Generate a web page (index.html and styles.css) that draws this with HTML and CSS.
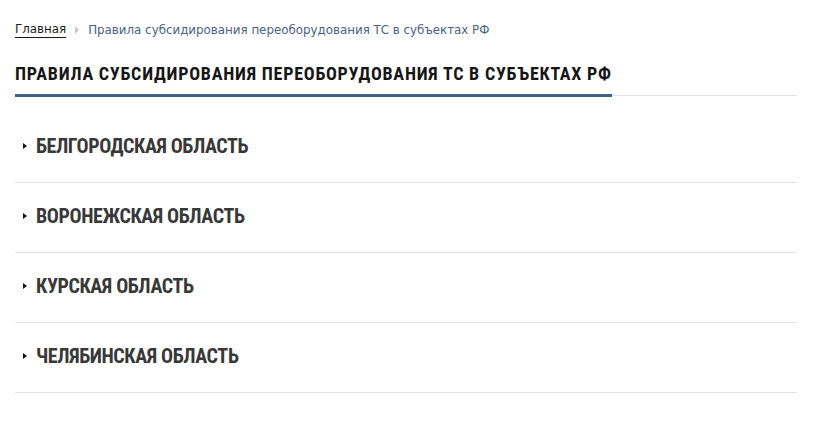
FILE: index.html
```html
<!DOCTYPE html>
<html lang="ru">
<head>
<meta charset="utf-8">
<title>Правила субсидирования переоборудования ТС в субъектах РФ</title>
<link rel="stylesheet" href="styles.css">
</head>
<body>
<div class="page">
  <nav class="crumbs">
    <a class="crumb-link" href="#">Главная</a>
    <span class="crumb-sep"></span>
    <span class="crumb-current">Правила субсидирования переоборудования ТС в субъектах РФ</span>
  </nav>
  <h1 class="title"><span class="title-text">Правила субсидирования переоборудования ТС в субъектах РФ</span></h1>
  <ul class="regions">
    <li class="region"><span class="marker"></span><span class="region-name">Белгородская область</span></li>
    <li class="region"><span class="marker"></span><span class="region-name">Воронежская область</span></li>
    <li class="region"><span class="marker"></span><span class="region-name">Курская область</span></li>
    <li class="region"><span class="marker"></span><span class="region-name">Челябинская область</span></li>
  </ul>
</div>
</body>
</html>
```

FILE: styles.css
```css
html, body {
  margin: 0;
  padding: 0;
  background: #fff;
}
.page {
  width: 782px;
  margin-left: 15px;
}
.crumbs {
  display: flex;
  align-items: center;
  padding-top: 21px;
  height: 18px;
  font-family: "DejaVu Sans", sans-serif;
  font-size: 11.85px;
  line-height: 18px;
}
.crumb-link {
  color: #1a1a1a;
  text-decoration: none;
  border-bottom: 1px solid #1a1a1a;
  line-height: 15px;
}
.crumb-sep {
  width: 0;
  height: 0;
  border-left: 4px solid #c8c8c8;
  border-top: 4px solid transparent;
  border-bottom: 4px solid transparent;
  margin: 0 9px 0 9px;
}
.crumb-current {
  color: #4a6285;
}
.title {
  margin: 25px 0 0 0;
  border-bottom: 1px solid #e3e3e3;
  font-family: Roboto, sans-serif;
  font-stretch: 75%;
  font-weight: 700;
  font-size: 18px;
  letter-spacing: 0.76px;
  line-height: 20px;
  text-transform: uppercase;
  color: #161616;
}
.title-text {
  display: inline-block;
  padding-bottom: 10px;
  border-bottom: 3px solid #3e6189;
  margin-bottom: -2px;
}
.regions {
  list-style: none;
  margin: 17px 0 0 0;
  padding: 0;
}
.region {
  display: flex;
  align-items: center;
  box-sizing: border-box;
  height: 70px;
  padding-bottom: 4px;
  border-bottom: 1px solid #e3e3e3;
  font-family: Roboto, sans-serif;
  font-stretch: 75%;
  font-weight: 700;
  font-size: 20px;
  letter-spacing: -0.4px;
  text-transform: uppercase;
  color: #383838;
}
.marker {
  width: 0;
  height: 0;
  border-left: 4px solid #111;
  border-top: 3px solid transparent;
  border-bottom: 3px solid transparent;
  margin: 0 9px 0 8px;
}
```
